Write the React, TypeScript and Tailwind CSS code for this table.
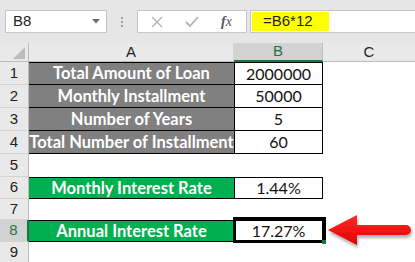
import React from "react";

const hdrFont = { fontFamily: '"Liberation Sans", Arial, sans-serif' };
const cellFont = { fontFamily: 'Lato, "Liberation Sans", sans-serif' };

function RowHdr({ n, h, active }: { n: number; h: string; active?: boolean }) {
  return (
    <div
      className={`${h} flex items-center justify-center text-[15px] border-b border-[#d4d4d4] ${
        active ? "bg-[#d2d2d2] text-[#217346] border-r-2 border-r-[#217346]" : "bg-[#e9e9e9] text-[#222] border-r border-r-[#bdbdbd]"
      }`}
      style={hdrFont}
    >
      {n}
    </div>
  );
}

export default function App() {
  const rows = [
    { n: 1, h: "h-[23px]", a: "Total Amount of Loan", b: "2000000", kind: "gray" },
    { n: 2, h: "h-[23px]", a: "Monthly Installment", b: "50000", kind: "gray" },
    { n: 3, h: "h-[23px]", a: "Number of Years", b: "5", kind: "gray" },
    { n: 4, h: "h-[23px]", a: "Total Number of Installment", b: "60", kind: "gray" },
    { n: 5, h: "h-[23px]", a: "", b: "", kind: "empty" },
    { n: 6, h: "h-[22px]", a: "Monthly Interest Rate", b: "1.44%", kind: "green" },
    { n: 7, h: "h-[21px]", a: "", b: "", kind: "empty" },
    { n: 8, h: "h-[22px]", a: "Annual Interest Rate", b: "17.27%", kind: "green", sel: true },
    { n: 9, h: "h-[22px]", a: "", b: "", kind: "empty" },
  ];

  return (
    <div className="w-[415px] h-[262px] overflow-hidden bg-white relative">
      {/* formula bar */}
      <div className="h-[43px] bg-[#e6e6e6] flex items-start pt-[10px] pl-[5px]">
        <div className="w-[102px] h-[23px] bg-white border border-[#c6c6c6] flex items-center justify-between pl-[7px] pr-[6px]">
          <span className="text-[15px] text-[#222]" style={hdrFont}>B8</span>
          <svg width="8" height="5" viewBox="0 0 8 5"><path d="M0 0 L8 0 L4 4.5 Z" fill="#6b6b6b" /></svg>
        </div>
        <div className="w-[30px] h-[23px] flex flex-col items-center justify-center gap-[2px]">
          <div className="w-[2px] h-[2px] bg-[#a0a0a0]" />
          <div className="w-[2px] h-[2px] bg-[#a0a0a0]" />
          <div className="w-[2px] h-[2px] bg-[#a0a0a0]" />
        </div>
        <div className="w-[110px] h-[23px] bg-white border border-[#c6c6c6] flex items-center">
          <svg className="ml-[13px]" width="12" height="12" viewBox="0 0 12 12">
            <path d="M1 1 L11 11 M11 1 L1 11" stroke="#b4b4b4" strokeWidth="1.4" />
          </svg>
          <svg className="ml-[22px]" width="14" height="12" viewBox="0 0 14 12">
            <path d="M1 6 L5 10 L13 1" stroke="#b4b4b4" strokeWidth="1.8" fill="none" />
          </svg>
          <span className="ml-[22px] text-[14px] italic text-[#555]" style={{ fontFamily: '"Liberation Serif", serif' }}>
            <span className="font-bold">f</span>x
          </span>
        </div>
        <div className="ml-[3px] flex-1 h-[23px] bg-white border border-[#c6c6c6] border-r-0 flex items-stretch">
          <div className="w-[77px] ml-[1px] my-[1px] bg-[#ffff00] flex items-center pl-[11px] text-[15px] text-[#222]" style={hdrFont}>
            =B6*12
          </div>
        </div>
      </div>

      {/* sheet */}
      <div className="grid grid-cols-[29px_205px_89px_92px]">
        {/* header row */}
        <div className="h-[19px] bg-[#e9e9e9] border-r border-[#bdbdbd] border-b border-b-[#bdbdbd] relative flex items-end justify-end pr-[3px] pb-[2px]">
          <svg width="12" height="12" viewBox="0 0 12 12"><path d="M12 0 L12 12 L0 12 Z" fill="#bcbcbc" /></svg>
        </div>
        <div className="h-[19px] bg-[#e9e9e9] border-r border-[#d4d4d4] border-b border-b-[#bdbdbd] flex items-center justify-center text-[15px] text-[#222]" style={hdrFont}>A</div>
        <div className="h-[19px] bg-[#d2d2d2] border-r border-[#bdbdbd] border-b-2 border-b-[#217346] flex items-center justify-center text-[15px] text-[#217346]" style={hdrFont}>B</div>
        <div className="h-[19px] bg-[#e9e9e9] border-b border-b-[#bdbdbd] flex items-center justify-center text-[15px] text-[#222]" style={hdrFont}>C</div>

        {rows.map((r) => (
          <React.Fragment key={r.n}>
            <RowHdr n={r.n} h={r.h} active={r.sel} />
            {r.kind === "empty" ? (
              <>
                <div className={r.h} />
                <div className={r.h} />
              </>
            ) : (
              <>
                <div
                  className={`${r.h} flex items-center justify-center text-white font-bold text-[16.5px] border-b border-black whitespace-nowrap ${
                    r.kind === "gray" ? "bg-[#808080]" : "bg-[#00b050]"
                  } ${r.n === 1 || r.kind === "green" ? "border-t" : ""}`}
                  style={cellFont}
                >
                  {r.a}
                </div>
                <div
                  className={`${r.h} relative flex items-center justify-center text-[16px] text-[#111] border-b border-x border-black ${
                    r.n === 1 || r.kind === "green" ? "border-t" : ""
                  }`}
                  style={cellFont}
                >
                  {r.b}
                  {r.sel && (
                    <>
                      <div className="absolute left-[-2px] right-[-4px] top-[-4px] bottom-[-2px] border-[3px] border-black" />
                      <div className="absolute right-[-4px] bottom-[-3px] w-[4px] h-[4px] bg-[#217346]" />
                    </>
                  )}
                </div>
              </>
            )}
            <div className={r.h} />
          </React.Fragment>
        ))}
      </div>

      {/* arrow */}
      <svg className="absolute left-[324px] top-[210px]" width="91" height="42" viewBox="0 0 91 42">
        <defs>
          <linearGradient id="rg" x1="0" y1="0" x2="0" y2="1">
            <stop offset="0" stopColor="#ff2a2a" />
            <stop offset="1" stopColor="#e00000" />
          </linearGradient>
          <filter id="sh" x="-20%" y="-20%" width="140%" height="160%">
            <feDropShadow dx="1" dy="3" stdDeviation="1.5" floodColor="#000" floodOpacity="0.3" />
          </filter>
        </defs>
        <path
          d="M4 20 L33 5 L33 15 L82 15 A5 5 0 0 1 82 25 L33 25 L33 35 Z"
          fill="url(#rg)"
          filter="url(#sh)"
        />
      </svg>
    </div>
  );
}
